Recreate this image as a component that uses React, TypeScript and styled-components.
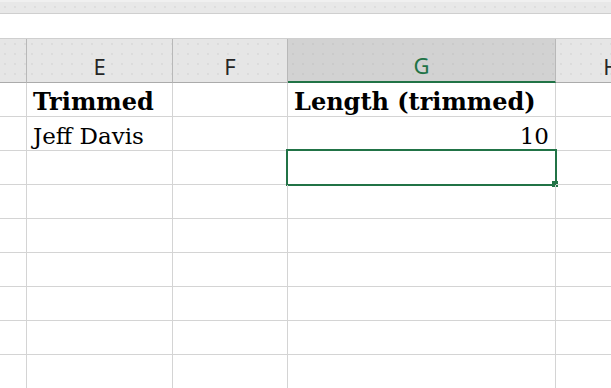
import styled, { createGlobalStyle } from 'styled-components'

const GlobalStyle = createGlobalStyle`
  html, body {
    margin: 0;
    padding: 0;
    background: #ffffff;
    overflow: hidden;
  }
`

const GREEN = '#217346'
const GRID_LINE = '#d4d4d4'

const Sheet = styled.div`
  width: 611px;
  height: 388px;
  overflow: hidden;
  background: #ffffff;
`

const RibbonEdge = styled.div`
  height: 11px;
  border-top: 2px solid #f0f0f0;
  border-bottom: 1px solid #cfcfcf;
  background-color: #e8e8e8;
  background-image: radial-gradient(circle, #dedede 0.7px, transparent 1px);
  background-size: 10px 10px;
`

const FormulaStrip = styled.div`
  height: 24px;
  background: #ffffff;
  border-bottom: 1px solid #cfcfcf;
`

const Grid = styled.div`
  display: grid;
  grid-template-columns: 27px 146px 115px 268px 112px;
  grid-auto-rows: 34px;
  grid-template-rows: 44px;
  width: 668px;
`

const ColumnHeader = styled.div<{ $active?: boolean }>`
  box-sizing: border-box;
  display: flex;
  align-items: center;
  justify-content: center;
  padding-top: 10px;
  font-family: 'Noto Sans', 'Open Sans', sans-serif;
  font-size: 22px;
  color: ${({ $active }) => ($active ? GREEN : '#262626')};
  background-color: ${({ $active }) => ($active ? '#d2d2d2' : '#e6e6e6')};
  background-image: radial-gradient(circle, ${({ $active }) => ($active ? '#cacaca' : '#dcdcdc')} 0.7px, transparent 1px);
  background-size: 10px 10px;
  border-right: 1px solid #b8b8b8;
  border-bottom: ${({ $active }) => ($active ? `2px solid ${GREEN}` : '1px solid #ababab')};
`

const Cell = styled.div<{ $bold?: boolean; $right?: boolean }>`
  box-sizing: border-box;
  position: relative;
  display: flex;
  align-items: flex-end;
  justify-content: ${({ $right }) => ($right ? 'flex-end' : 'flex-start')};
  padding: 0 6px 2px 6px;
  font-family: 'DejaVu Serif', 'Liberation Serif', serif;
  font-size: ${({ $bold }) => ($bold ? '24px' : '23px')};
  font-weight: ${({ $bold }) => ($bold ? 700 : 400)};
  line-height: 1;
  color: #000000;
  white-space: nowrap;
  border-right: 1px solid ${GRID_LINE};
  border-bottom: 1px solid ${GRID_LINE};
`

// selection frame sits over the gridlines of the active cell
const Selection = styled.div`
  position: absolute;
  left: -2px;
  top: -2px;
  right: -2px;
  bottom: -2px;
  border: 2px solid ${GREEN};
  pointer-events: none;
`

const FillHandle = styled.div`
  position: absolute;
  right: -3px;
  bottom: -3px;
  width: 6px;
  height: 6px;
  background: ${GREEN};
`

type CellData = { text?: string; bold?: boolean; right?: boolean; selected?: boolean }

const columns = ['', 'E', 'F', 'G', 'H']
const activeColumn = 'G'

const rows: CellData[][] = [
  [{}, { text: 'Trimmed', bold: true }, {}, { text: 'Length (trimmed)', bold: true }, {}],
  [{}, { text: 'Jeff Davis' }, {}, { text: '10', right: true }, {}],
  [{}, {}, {}, { selected: true }, {}],
  [{}, {}, {}, {}, {}],
  [{}, {}, {}, {}, {}],
  [{}, {}, {}, {}, {}],
  [{}, {}, {}, {}, {}],
  [{}, {}, {}, {}, {}],
  [{}, {}, {}, {}, {}],
]

const App = () => {
  return (
    <Sheet>
      <GlobalStyle />
      <RibbonEdge />
      <FormulaStrip />
      <Grid>
        {columns.map((col, i) => (
          <ColumnHeader key={`h-${i}`} $active={col === activeColumn}>
            {col}
          </ColumnHeader>
        ))}
        {rows.map((row, r) =>
          row.map((cell, c) => (
            <Cell key={`${r}-${c}`} $bold={cell.bold} $right={cell.right}>
              {cell.text}
              {cell.selected && (
                <Selection>
                  <FillHandle />
                </Selection>
              )}
            </Cell>
          ))
        )}
      </Grid>
    </Sheet>
  )
}

export default App
